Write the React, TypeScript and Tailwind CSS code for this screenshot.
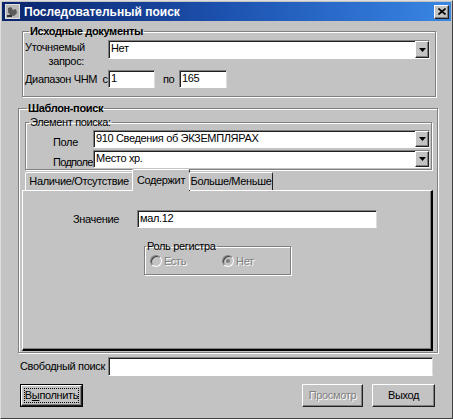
import React from "react";

const font = "font-['Liberation_Sans',Arial,sans-serif]";

const sunken =
  "bg-white border border-t-[#808080] border-l-[#808080] border-b-white border-r-[#dcdcdc] shadow-[inset_1px_1px_0_#202020]";

const raised =
  "bg-[#c3c3c3] border border-t-white border-l-white border-r-[#202020] border-b-[#202020] shadow-[inset_-1px_-1px_0_#808080]";

const etched = "border border-[#808080] shadow-[1px_1px_0_#fff,inset_1px_1px_0_#fff]";

function Arrow() {
  return (
    <svg width="7" height="4" viewBox="0 0 7 4">
      <path d="M0 0h7L3.5 4z" fill="#000" />
    </svg>
  );
}

function Select({ value, className }: { value: string; className: string }) {
  return (
    <div className={`${sunken} ${className} flex items-stretch`}>
      <div className="flex-1 pl-[2px] leading-[15px] text-black truncate">{value}</div>
      <div className={`${raised} w-[14px] flex items-center justify-center`}>
        <Arrow />
      </div>
    </div>
  );
}

function Field({ value, className }: { value?: string; className: string }) {
  return (
    <div className={`${sunken} ${className} pl-[2px] leading-[15px] text-black`}>{value}</div>
  );
}

function Radio({ label, checked }: { label: string; checked?: boolean }) {
  return (
    <div className="flex items-center gap-[2px]">
      <div className="w-[12px] h-[12px] rounded-full border border-t-[#808080] border-l-[#808080] border-b-white border-r-white bg-[#c3c3c3] flex items-center justify-center shadow-[inset_1px_1px_0_#404040]">
        {checked && <div className="w-[4px] h-[4px] rounded-full bg-[#808080]" />}
      </div>
      <span className="text-[#808080] [text-shadow:1px_1px_0_#fff]">{label}</span>
    </div>
  );
}

export default function App() {
  return (
    <div
      className={`${font} text-[11px] tracking-[-0.35px] whitespace-nowrap text-black w-[453px] h-[419px] overflow-hidden bg-[#c3c3c3] border border-t-[#dfdfdf] border-l-[#dfdfdf] border-r-[#404040] border-b-[#404040] p-[1px] flex flex-col`}
    >
      {/* title bar */}
      <div className="h-[19px] shrink-0 bg-gradient-to-r from-[#0a246a] via-[#1d52b0] to-[#3a86e4] flex items-center pl-[3px] pr-[2px]">
        <svg width="15" height="15" viewBox="0 0 15 15">
          <rect x="0.5" y="0.5" width="14" height="14" fill="#b8b8b8" stroke="#e0e0e0" />
          <path d="M3 4l3-1 2 3 3-1 1 4-3 3-4-1-2-3z" fill="#5a5a5a" />
          <rect x="2" y="11" width="5" height="2" fill="#303030" />
        </svg>
        <span className="ml-[4px] text-white font-bold text-[12px] tracking-[0px]">
          Последовательный поиск
        </span>
        <div className={`${raised} ml-auto w-[15px] h-[14px] flex items-center justify-center`}>
          <svg width="8" height="7" viewBox="0 0 8 7">
            <path d="M0.5 0.5l7 6M7.5 0.5l-7 6" stroke="#000" strokeWidth="1.6" />
          </svg>
        </div>
      </div>

      {/* Исходные документы */}
      <fieldset className={`${etched} shrink-0 ml-[20px] mt-[4px] w-[414px] pt-[2px] pb-[8px] pl-[2px] pr-[4px]`}>
        <legend className="ml-[4px] px-[1px] font-bold leading-[13px]">Исходные документы</legend>
        <div className="flex items-start h-[19px]">
          <div className="w-[83px] flex flex-col items-end pr-[24px] leading-[14px]">
            <span className="self-start">Уточняемый</span>
            <span>запрос:</span>
          </div>
          <Select value="Нет" className="w-[322px] h-[19px]" />
        </div>
        <div className="flex items-center mt-[11px]">
          <span className="w-[83px]">Диапазон ЧНМ&nbsp; с</span>
          <Field value="1" className="w-[47px] h-[18px]" />
          <span className="ml-[8px] w-[16px]">по</span>
          <Field value="165" className="w-[48px] h-[18px]" />
        </div>
      </fieldset>

      {/* Шаблон-поиск */}
      <fieldset className={`${etched} shrink-0 ml-[16px] mt-[5px] w-[420px] pt-0 pb-[1px]`}>
        <legend className="ml-[8px] px-[1px] font-bold leading-[13px]">Шаблон-поиск</legend>

        <fieldset className={`${etched} ml-[6px] mt-[1px] w-[407px] pt-[2px] pb-[1px] pl-[27px] pr-[1px]`}>
          <legend className="-ml-[24px] px-[1px] leading-[12px]">Элемент поиска:</legend>
          <div className="flex items-end">
            <span className="w-[40px] leading-[12px]">Поле</span>
            <Select value="910 Сведения об ЭКЗЕМПЛЯРАХ" className="w-[337px] h-[18px]" />
          </div>
          <div className="flex items-end mt-[2px]">
            <span className="w-[40px] leading-[12px] tracking-[-0.7px]">Подполе</span>
            <Select value="Место хр." className="w-[337px] h-[18px]" />
          </div>
        </fieldset>

        {/* tabs */}
        <div className="ml-[6px] -mt-[1px] flex items-end h-[21px] relative z-10">
          <div className={`${raised} shadow-none border-b-0 border-r-[#404040] h-[18px] w-[108px] flex items-center justify-center rounded-t-[2px]`}>
            Наличие/Отсутствие
          </div>
          <div className="bg-[#c3c3c3] border border-t-white border-l-white border-r-[#202020] border-b-0 h-[22px] -mb-[1px] w-[58px] flex items-center justify-center rounded-t-[2px] -mx-[1px]">
            Содержит
          </div>
          <div className={`${raised} shadow-none border-b-0 h-[18px] w-[84px] flex items-center justify-center rounded-t-[2px]`}>
            Больше/Меньше
          </div>
        </div>
        <div className="ml-[3px] w-[411px] h-[161px] bg-[#c3c3c3] border-t border-l border-r-2 border-b-2 border-t-white border-l-white border-r-black border-b-black shadow-[inset_-1px_-1px_0_#808080] pt-[19px]">
          <div className="flex items-center">
            <span className="ml-[50px] w-[64px]">Значение</span>
            <Field value="мал.12" className="w-[240px] h-[18px]" />
          </div>
          <fieldset className={`${etched} ml-[121px] mt-[12px] w-[147px] pt-[1px] pb-[4px] pl-[5px]`}>
            <legend className="-ml-[4px] px-[1px] leading-[12px]">Роль регистра</legend>
            <div className="flex items-center gap-[36px]">
              <Radio label="Есть" />
              <Radio label="Нет" checked />
            </div>
          </fieldset>
        </div>
      </fieldset>

      {/* Свободный поиск */}
      <div className="ml-[18px] mt-[4px] flex items-center">
        <span className="w-[88px]">Свободный поиск</span>
        <Field className="w-[325px] h-[19px]" />
      </div>

      {/* buttons */}
      <div className="ml-[18px] mt-[8px] w-[415px] flex items-center">
        <div className="border border-black w-[63px] h-[23px]">
          <div className={`${raised} w-full h-full flex items-center justify-center p-[2px]`}>
            <div className="w-full h-full border border-dotted border-black flex items-center justify-center">
              <span>
                В<span className="underline">ы</span>полнить
              </span>
            </div>
          </div>
        </div>
        <div className={`${raised} ml-auto w-[61px] h-[23px] flex items-center justify-center text-[#808080] [text-shadow:1px_1px_0_#fff]`}>
          Просмотр
        </div>
        <div className={`${raised} ml-[9px] w-[63px] h-[23px] flex items-center justify-center`}>
          Выход
        </div>
      </div>
    </div>
  );
}
